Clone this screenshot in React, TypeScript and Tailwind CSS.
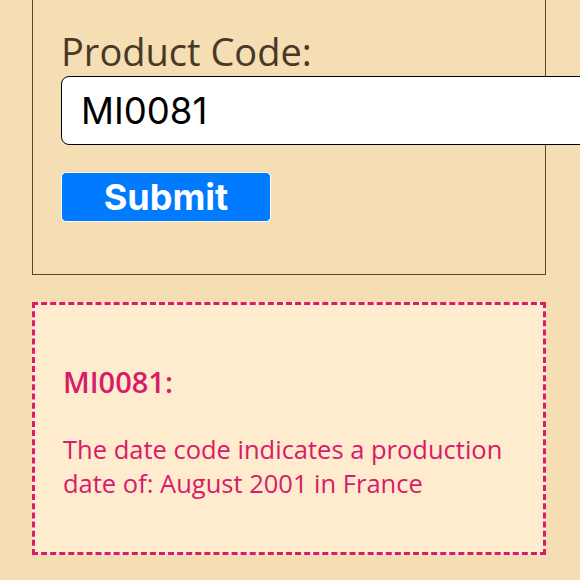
import React, { useState } from 'react';

const App: React.FC = () => {
    const [code, setCode] = useState('MI0081');

    return (
        <div className="min-h-[580px] w-[580px] overflow-hidden bg-[#f5deb3] px-8 pb-6 font-['Open_Sans',sans-serif]">
            <div className="w-[514px] border-x-[1.5px] border-b-[1.5px] border-[#5b4630] pl-[28px] pt-[26px] pb-[52px]">
                <label className="block text-[38px] leading-[50px] text-[#4a3826]">Product Code:</label>
                <input
                    value={code}
                    onChange={e => setCode(e.target.value)}
                    className="mt-[0px] block h-[69px] w-[560px] rounded-[8px] border-[1.5px] border-black bg-white pl-[19px] font-['Inter',sans-serif] text-[36.5px] text-black outline-none"
                />
                <button className="mt-[27px] block h-[50px] w-[210px] rounded-[5px] border border-white bg-[#007bff] font-['Inter',sans-serif] text-[36px] font-bold leading-none text-white">
                    Submit
                </button>
            </div>

            <div className="mt-[27px] h-[253px] w-[514px] border-[3px] border-dashed border-[#d81b6a] bg-[#ffebcd] px-[28px] pt-[59px] text-[#d81b6a]">
                <h3 className="text-[29px] font-semibold leading-[36px]">MI0081:</h3>
                <p className="mt-[32px] text-[25.5px] leading-[34px]">
                    The date code indicates a production date of: August 2001 in France
                </p>
            </div>
        </div>
    );
};

export default App;
